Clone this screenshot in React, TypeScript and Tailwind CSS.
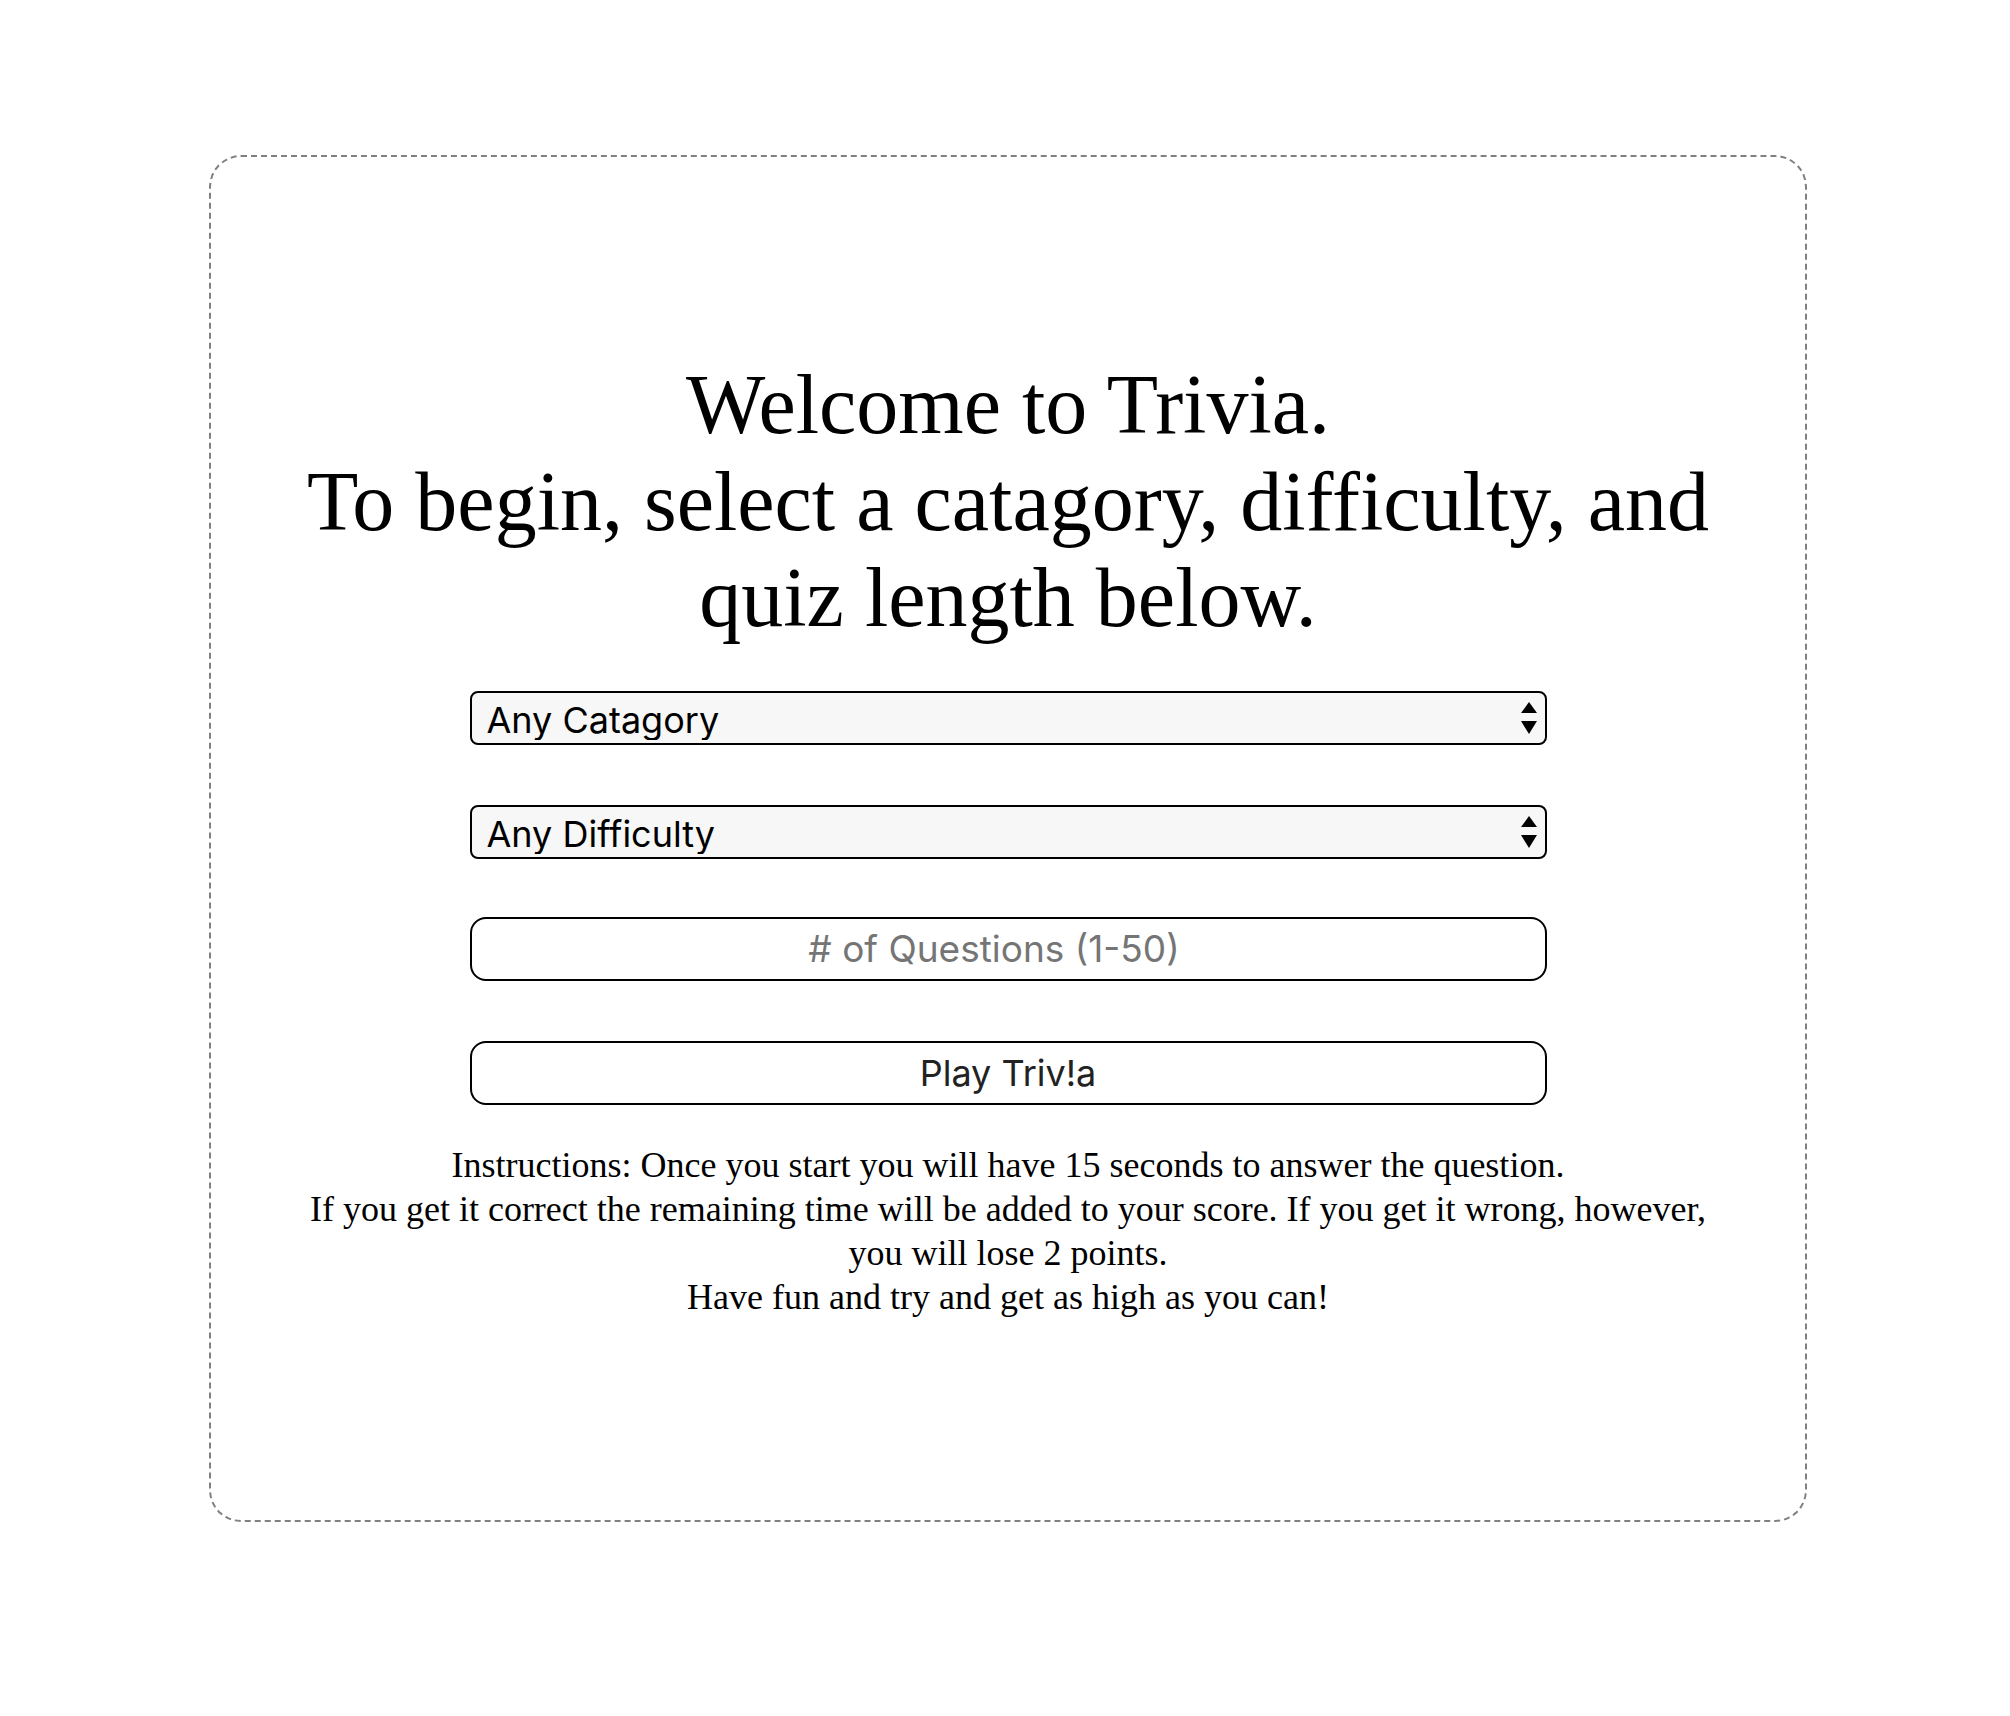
const Arrows = () => (
  <svg
    className="pointer-events-none absolute right-[9px] top-1/2 h-[34px] w-[18px] -translate-y-1/2"
    viewBox="0 0 18 34"
  >
    <path d="M9 1 L17 12 L1 12 Z" fill="#000" />
    <path d="M1 20 L17 20 L9 33 Z" fill="#000" />
  </svg>
);

const App = () => {
  return (
    <div className="min-h-[1716px] bg-white pt-[155px]">
      <div className="ml-[209px] h-[1367px] w-[1598px] rounded-[32px] border-2 border-dashed border-[#808080] px-[40px] pt-[200px] font-['Liberation_Serif',serif] text-black">
        <h1 className="flex flex-col items-center whitespace-nowrap text-[84px] font-normal leading-[1.149]">
          <span>Welcome to Trivia.</span>
          <span>To begin, select a catagory, difficulty, and</span>
          <span>quiz length below.</span>
        </h1>
        <div className="mx-auto mt-[44px] flex w-[1077px] flex-col font-['Inter',sans-serif]">
          <div className="relative">
            <select className="h-[54px] w-full appearance-none rounded-[8px] border-2 border-black bg-[#f7f7f7] pb-[3px] pl-[15px] text-[36px] text-black outline-none">
              <option>Any Catagory</option>
            </select>
            <Arrows />
          </div>
          <div className="relative mt-[60px]">
            <select className="h-[54px] w-full appearance-none rounded-[8px] border-2 border-black bg-[#f7f7f7] pb-[3px] pl-[15px] text-[36px] text-black outline-none">
              <option>Any Difficulty</option>
            </select>
            <Arrows />
          </div>
          <input
            type="text"
            placeholder="# of Questions (1-50)"
            className="mt-[58px] h-[64px] w-full rounded-[16px] border-2 border-black bg-white pr-[28px] text-center text-[37px] text-black outline-none placeholder:text-[#757575]"
          />
          <button className="mt-[60px] h-[64px] w-full rounded-[16px] border-2 border-black bg-white text-center text-[36px] text-[#222]">
            Play Triv!a
          </button>
        </div>
        <div className="mt-[38px] flex flex-col items-center whitespace-nowrap text-[36px] leading-[44px]">
          <p>
            Instructions: Once you start you will have 15 seconds to answer the
            question.
          </p>
          <p>
            If you get it correct the remaining time will be added to your
            score. If you get it wrong, however,
          </p>
          <p>you will lose 2 points.</p>
          <p>Have fun and try and get as high as you can!</p>
        </div>
      </div>
    </div>
  );
};

export default App;
